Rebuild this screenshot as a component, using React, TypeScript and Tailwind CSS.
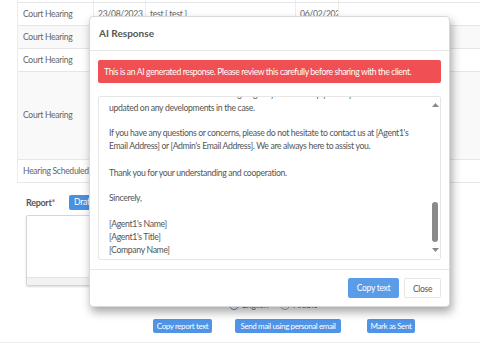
import React from "react";

const font = { fontFamily: "Lato, 'Open Sans', sans-serif" };

function Row({ h, bg, children }: { h: string; bg: string; children?: React.ReactNode }) {
  return (
    <div className={`flex ${h} ${bg} border-b border-[#e6e6e6]`}>
      <div className="w-[76px] shrink-0 border-r border-[#ececec] flex items-center pl-[5px]">{children}</div>
      <div className="w-[52px] shrink-0 border-r border-[#ececec]" />
      <div className="w-[150px] shrink-0 border-r border-[#ececec]" />
      <div className="w-[43px] shrink-0 border-r border-[#ececec]" />
      <div className="flex-1" />
    </div>
  );
}

export default function App() {
  return (
    <div className="relative w-[480px] h-[350px] overflow-hidden bg-white text-[#666]" style={font}>
      {/* background table */}
      <div className="ml-[17px] border-l border-[#ececec] text-[8.6px] tracking-[-0.3px]">
        <div className="h-[3px] border-b border-[#e6e6e6] flex">
          <div className="w-[76px] border-r border-[#ececec]" />
          <div className="w-[52px] border-r border-[#ececec]" />
          <div className="w-[150px] border-r border-[#ececec]" />
          <div className="w-[43px] border-r border-[#ececec]" />
        </div>
        <div className="flex h-[23px] bg-white border-b border-[#e6e6e6] items-stretch whitespace-nowrap">
          <div className="w-[76px] shrink-0 border-r border-[#ececec] flex items-center pl-[5px]">Court Hearing</div>
          <div className="w-[52px] shrink-0 border-r border-[#ececec] flex items-center pl-[4px] overflow-hidden">23/08/2023</div>
          <div className="w-[150px] shrink-0 border-r border-[#ececec] flex items-center pl-[4px]">test [ test ]</div>
          <div className="w-[43px] shrink-0 border-r border-[#ececec] flex items-center pl-[4px] overflow-hidden">06/02/2024</div>
          <div className="flex-1" />
        </div>
        <Row h="h-[23px]" bg="bg-[#f9f9f9]">Court Hearing</Row>
        <Row h="h-[23px]" bg="bg-white">Court Hearing</Row>
        <Row h="h-[88px]" bg="bg-[#f9f9f9]">Court Hearing</Row>
        <Row h="h-[23px]" bg="bg-white">
          <span className="whitespace-nowrap">Hearing Scheduled</span>
        </Row>
      </div>

      {/* report section */}
      <div className="pl-[26px] pt-[12px]">
        <div className="flex items-center gap-[14px]">
          <span className="text-[9px] font-bold text-[#555] tracking-[-0.3px]">
            Report<span className="text-[#e53e3e]">*</span>
          </span>
          <span className="bg-[#4a90e2] text-white text-[8.5px] tracking-[-0.2px] px-[5px] h-[15px] leading-[15px] rounded-[2px]">Draft</span>
        </div>
        <div className="mt-[5px] w-[300px] h-[71px] border border-[#d5d5d5] rounded-[2px] shadow-[0_1px_2px_rgba(0,0,0,0.15)] flex flex-col">
          <div className="flex-1" />
          <div className="h-[8px] bg-[#f2f2f2] border-t border-[#e2e2e2]" />
        </div>
        <div className="mt-[13px] ml-[203px] flex items-center gap-[12px] text-[8.5px] text-[#666]">
          <span className="flex items-center gap-[3px]">
            <span className="w-[10px] h-[10px] rounded-full border border-[#4a90e2]" />English
          </span>
          <span className="flex items-center gap-[3px]">
            <span className="w-[10px] h-[10px] rounded-full border border-[#aaa]" />Arabic
          </span>
        </div>
      </div>
      <div className="flex items-center mt-[7px] text-[8px] tracking-[-0.4px] text-white whitespace-nowrap">
        <span className="ml-[153px] w-[59px] h-[14px] leading-[14px] text-center bg-[#4f94e6] rounded-[2px]">Copy report text</span>
        <span className="ml-[23px] w-[106px] h-[14px] leading-[14px] text-center bg-[#4f94e6] rounded-[2px]">Send mail using personal email</span>
        <span className="ml-[26px] w-[48px] h-[14px] leading-[14px] text-center bg-[#4f94e6] rounded-[2px]">Mark as Sent</span>
      </div>
      <div className="mt-[9px] h-px bg-[#ececec]" />

      {/* modal */}
      <div className="absolute left-[89px] top-[16px] w-[361px] h-[291px] bg-white rounded-[4px] border border-[#d9d9d9] shadow-[2px_5px_10px_rgba(0,0,0,0.35)] flex flex-col">
        <div className="h-[34px] border-b border-[#e8e8e8] flex items-center pl-[9px] text-[10px] font-bold text-[#555]">
          AI Response
        </div>
        <div className="px-[8px] pt-[9px]">
          <div className="h-[23px] bg-[#f04f53] rounded-[2px] flex items-center pl-[6px] text-white text-[8.7px] tracking-[-0.4px] whitespace-nowrap overflow-hidden">
            This is an AI generated response. Please review this carefully before sharing with the client.
          </div>
          <div className="relative mt-[13px] h-[164px] border border-[#e6e6e6] rounded-[2px] overflow-hidden">
            <div className="pl-[10px] -mt-[10px] text-[8.7px] tracking-[-0.35px] leading-[13px] text-[#555] whitespace-nowrap">
              <p>Please be assured that we are working diligently and will keep you fully</p>
              <p className="mt-[1px]">updated on any developments in the case.</p>
              <p className="mt-[12px]">If you have any questions or concerns, please do not hesitate to contact us at [Agent1's</p>
              <p>Email Address] or [Admin's Email Address]. We are always here to assist you.</p>
              <p className="mt-[14px]">Thank you for your understanding and cooperation.</p>
              <p className="mt-[12px]">Sincerely,</p>
              <p className="mt-[13px]">[Agent1's Name]</p>
              <p>[Agent1's Title]</p>
              <p>[Company Name]</p>
            </div>
            <div className="absolute right-0 top-0 bottom-0 w-[10px] bg-white flex flex-col items-center">
              <svg className="mt-[6px]" width="7" height="4" viewBox="0 0 7 4"><path d="M0 4L3.5 0L7 4Z" fill="#888" /></svg>
              <div className="mt-[95px] w-[6px] h-[40px] rounded-[3px] bg-[#8a8a8a]" />
              <svg className="mt-[6px]" width="7" height="4" viewBox="0 0 7 4"><path d="M0 0L3.5 4L7 0Z" fill="#888" /></svg>
            </div>
          </div>
        </div>
        <div className="mt-[9px] border-t border-[#e8e8e8] flex justify-end items-center gap-[5px] pr-[8px] pt-[8px]">
          <span className="w-[51px] h-[20px] leading-[20px] text-center bg-[#5a9ce8] text-white text-[8.5px] tracking-[-0.3px] rounded-[2px]">Copy text</span>
          <span className="w-[37px] h-[20px] leading-[20px] text-center bg-white border border-[#e6e6e6] text-[#555] text-[8.5px] tracking-[-0.3px] rounded-[2px]">Close</span>
        </div>
      </div>
    </div>
  );
}
